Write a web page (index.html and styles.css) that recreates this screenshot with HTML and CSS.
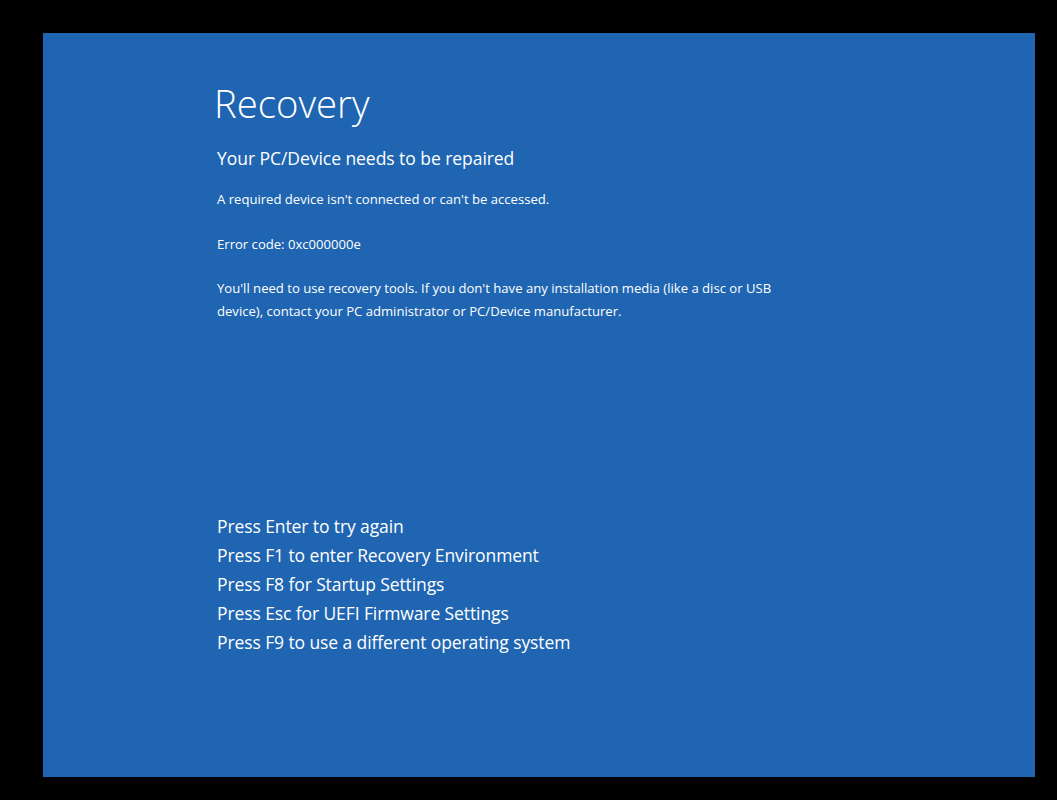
FILE: index.html
```html
<!DOCTYPE html>
<html lang="en">
<head>
  <meta charset="UTF-8">
  <meta name="viewport" content="width=device-width, initial-scale=1.0">
  <title>Recovery</title>
  <link rel="stylesheet" href="styles.css">
</head>
<body>

<div class="screen">
  <h1>Recovery</h1>
  <h2>Your PC/Device needs to be repaired</h2>
  <p class="first">A required device isn't connected or can't be accessed.</p>
  <p>Error code: 0xc000000e</p>
  <p class="long">You'll need to use recovery tools. If you don't have any installation media (like a disc or USB device), contact your PC administrator or PC/Device manufacturer.</p>

  <ul class="keys">
    <li>Press Enter to try again</li>
    <li>Press F1 to enter Recovery Environment</li>
    <li>Press F8 for Startup Settings</li>
    <li>Press Esc for UEFI Firmware Settings</li>
    <li>Press F9 to use a different operating system</li>
  </ul>
</div>

</body>
</html>
```

FILE: styles.css
```css
html, body {
  margin: 0;
  padding: 0;
  background-color: #000;
}
body {
  font-family: "Open Sans", "Noto Sans", sans-serif;
  color: #fff;
  padding: 33px 0 0 43px;
}
.screen {
  box-sizing: border-box;
  width: 992px;
  height: 744px;
  background-color: #1f65b1;
  padding: 45px 0 0 172px;
}
h1 {
  margin: 0 0 0 -1px;
  font-size: 38.3px;
  font-weight: 300;
  line-height: 50px;
}
h2 {
  margin: 18px 0 0 2px;
  font-size: 17.5px;
  font-weight: 400;
  line-height: 24px;
  letter-spacing: -0.05px;
}
p {
  margin: 23px 0 0 2px;
  width: 560px;
  font-size: 13.1px;
  line-height: 22px;
}
p.first {
  margin-top: 18px;
}
p.long {
  margin-top: 22px;
  line-height: 23px;
}
.keys {
  list-style: none;
  margin: 189px 0 0 2px;
  padding: 0;
}
.keys li {
  font-size: 17.5px;
  line-height: 29px;
  letter-spacing: -0.1px;
}
```
